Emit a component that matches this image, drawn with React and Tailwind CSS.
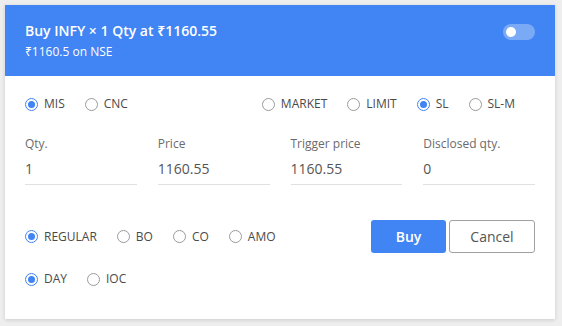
import { useState } from "react";

const FONT = { fontFamily: '"Open Sans", "Noto Sans", sans-serif' };

function Radio({ label, checked }) {
  return (
    <label className="flex items-center gap-[6px] text-[12px] leading-[20px] text-[#4a4a4a]">
      {checked ? (
        <span className="flex h-[13px] w-[13px] items-center justify-center rounded-full border-[1.5px] border-[#4184f3]">
          <span className="h-[7px] w-[7px] rounded-full bg-[#4184f3]" />
        </span>
      ) : (
        <span className="h-[13px] w-[13px] rounded-full border-[1.5px] border-[#9b9b9b]" />
      )}
      <span>{label}</span>
    </label>
  );
}

function Field({ label, value }) {
  return (
    <div className="flex flex-col">
      <span className="text-[12px] leading-[16px] text-[#6b6b6b]">{label}</span>
      <span className="mt-[7px] border-b border-[#e0e0e0] pb-[5px] text-[14px] leading-[20px] text-[#555]">
        {value}
      </span>
    </div>
  );
}

const FIELDS = [
  { label: "Qty.", value: "1" },
  { label: "Price", value: "1160.55" },
  { label: "Trigger price", value: "1160.55" },
  { label: "Disclosed qty.", value: "0" },
];

export default function App() {
  const [on] = useState(false);

  return (
    <div className="min-h-screen bg-[#eeeeee] p-[5px]" style={FONT}>
      <div className="w-[550px] h-[314px] bg-white shadow-[0_1px_4px_rgba(0,0,0,0.15)]">
        <div className="flex items-start justify-between bg-[#4184f3] px-5 pt-4 pb-4 text-white">
          <div>
            <div className="text-[14px] font-semibold leading-[20px]">
              Buy INFY × 1 Qty at ₹1160.55
            </div>
            <div className="mt-[3px] text-[12px] leading-[16px]">₹1160.5 on NSE</div>
          </div>
          <div
            className={`mt-[3px] flex h-[16px] w-[32px] items-center rounded-full bg-white/30 px-[3px] ${
              on ? "justify-end" : "justify-start"
            }`}
          >
            <span className="h-[10px] w-[10px] rounded-full bg-white" />
          </div>
        </div>

        <div className="px-5">
          <div className="flex items-center justify-between pt-[18px] pr-5">
            <div className="flex items-center gap-5">
              <Radio label="MIS" checked />
              <Radio label="CNC" />
            </div>
            <div className="flex items-center gap-5">
              <Radio label="MARKET" />
              <Radio label="LIMIT" />
              <Radio label="SL" checked />
              <Radio label="SL-M" />
            </div>
          </div>

          <div className="mt-[22px] grid grid-cols-4 gap-x-[21px]">
            {FIELDS.map((f) => (
              <Field key={f.label} label={f.label} value={f.value} />
            ))}
          </div>

          <div className="mt-[35px] flex items-center">
            <div className="flex items-center gap-5">
              <Radio label="REGULAR" checked />
              <Radio label="BO" />
              <Radio label="CO" />
              <Radio label="AMO" />
            </div>
            <div className="ml-auto flex items-center gap-[3px]">
              <button className="h-[33px] w-[75px] rounded-[3px] bg-[#4184f3] text-[14px] font-semibold text-white">
                Buy
              </button>
              <button className="h-[33px] w-[86px] rounded-[3px] border border-[#a0a0a0] bg-white text-[14px] text-[#555]">
                Cancel
              </button>
            </div>
          </div>

          <div className="mt-4 flex items-center gap-5">
            <Radio label="DAY" checked />
            <Radio label="IOC" />
          </div>
        </div>
      </div>
    </div>
  );
}
